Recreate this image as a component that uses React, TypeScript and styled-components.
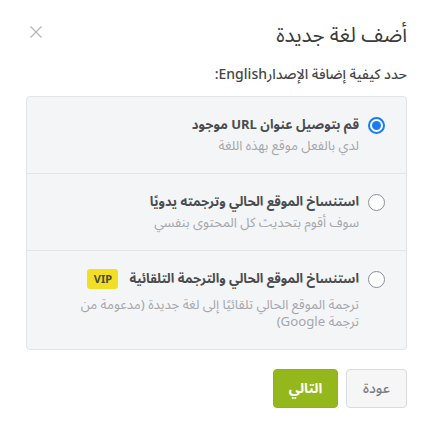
import React, { useState } from "react";
import styled, { createGlobalStyle } from "styled-components";

const Global = createGlobalStyle`
  html, body { margin: 0; padding: 0; background: #ffffff; }
  body { font-family: "Noto Sans Arabic", "Noto Sans", "DejaVu Sans", sans-serif; }
`;

const Dialog = styled.div`
  direction: rtl;
  position: relative;
  width: 433px;
  height: 444px;
  box-sizing: border-box;
  padding: 22px 26px 0 26px;
  background: #fff;
`;

const Close = styled.button`
  position: absolute;
  left: 30px;
  top: 26px;
  width: 12px;
  height: 12px;
  padding: 0;
  border: none;
  background: none;
  cursor: pointer;
  display: flex;
`;

const Title = styled.h2`
  margin: 0;
  font-size: 20.5px;
  line-height: 28px;
  font-weight: 400;
  color: #3a3a3a;
`;

const Subtitle = styled.p`
  margin: 15px 0 11px 0;
  font-size: 14px;
  line-height: 20px;
  font-weight: 500;
  color: #444;
`;

const Panel = styled.div`
  border: 1px solid #e2e4e8;
  border-radius: 4px;
  background: #f4f5f7;
  overflow: hidden;
`;

const Option = styled.label`
  display: flex;
  align-items: flex-start;
  gap: 9px;
  padding: 18px 21px 18px 23px;
  cursor: pointer;
  & + & { border-top: 1px solid #e2e4e8; }
`;

const Radio = styled.span<{ $checked: boolean }>`
  flex: none;
  width: 17px;
  height: 17px;
  margin-top: 2px;
  box-sizing: border-box;
  border-radius: 50%;
  border: ${(p) => (p.$checked ? "2px solid #1a7bf2" : "1.5px solid #8b8e94")};
  background: #fff;
  display: flex;
  align-items: center;
  justify-content: center;
  &::after {
    content: "";
    display: ${(p) => (p.$checked ? "block" : "none")};
    width: 9px;
    height: 9px;
    border-radius: 50%;
    background: #1a7bf2;
  }
`;

const Body = styled.div`
  display: flex;
  flex-direction: column;
  flex: 1;
  min-width: 0;
`;

const OptTitle = styled.div`
  display: flex;
  align-items: center;
  gap: 11px;
  min-height: 20px;
  font-size: 13px;
  line-height: 20px;
  font-weight: 700;
  color: #4a4b4e;
`;

const OptDesc = styled.div<{ $gap?: number }>`
  margin-top: ${(p) => p.$gap ?? 0}px;
  font-size: 13.2px;
  line-height: 17px;
  color: #a5a7ab;
  padding-top: 3px;
`;

const Badge = styled.span`
  display: inline-flex;
  align-items: center;
  justify-content: center;
  height: 20px;
  width: 31px;
  border-radius: 3px;
  background: #f2df25;
  color: #4a4a3a;
  font-family: "Noto Sans", sans-serif;
  font-size: 11px;
  font-weight: 700;
  direction: ltr;
`;

const Footer = styled.div`
  display: flex;
  gap: 8px;
  margin-top: 19px;
`;

const Button = styled.button<{ $primary?: boolean }>`
  height: 39px;
  box-sizing: border-box;
  border-radius: 4px;
  font-family: inherit;
  font-size: 14px;
  font-weight: ${(p) => (p.$primary ? 700 : 500)};
  cursor: pointer;
  border: 1px solid ${(p) => (p.$primary ? "#8fb21c" : "#d9dbdf")};
  background: ${(p) => (p.$primary ? "#94b81c" : "#f6f6f7")};
  color: ${(p) => (p.$primary ? "#ffffff" : "#7a7c82")};
  width: ${(p) => (p.$primary ? "65px" : "61px")};
`;

export default function App() {
  const [choice, setChoice] = useState(0);
  const options = [
    { title: "قم بتوصيل عنوان URL موجود", desc: "لدي بالفعل موقع بهذه اللغة" },
    { title: "استنساخ الموقع الحالي وترجمته يدويًا", desc: "سوف أقوم بتحديث كل المحتوى بنفسي" },
    {
      title: "استنساخ الموقع الحالي والترجمة التلقائية",
      desc: "ترجمة الموقع الحالي تلقائيًا إلى لغة جديدة (مدعومة من ترجمة Google)",
      vip: true,
    },
  ];
  return (
    <>
      <Global />
      <Dialog>
        <Close aria-label="close">
          <svg width="12" height="12" viewBox="0 0 12 12">
            <path d="M0.5 0.5L11.5 11.5M11.5 0.5L0.5 11.5" stroke="#b8b8b8" strokeWidth="1.3" />
          </svg>
        </Close>
        <Title>أضف لغة جديدة</Title>
        <Subtitle>حدد كيفية إضافة الإصدارEnglish:</Subtitle>
        <Panel>
          {options.map((o, i) => (
            <Option key={i} onClick={() => setChoice(i)}>
              <Radio $checked={choice === i} />
              <Body>
                <OptTitle>
                  {o.title}
                  {o.vip && <Badge>VIP</Badge>}
                </OptTitle>
                <OptDesc $gap={o.vip ? 5 : 0}>{o.desc}</OptDesc>
              </Body>
            </Option>
          ))}
        </Panel>
        <Footer>
          <Button>عودة</Button>
          <Button $primary>التالي</Button>
        </Footer>
      </Dialog>
    </>
  );
}
